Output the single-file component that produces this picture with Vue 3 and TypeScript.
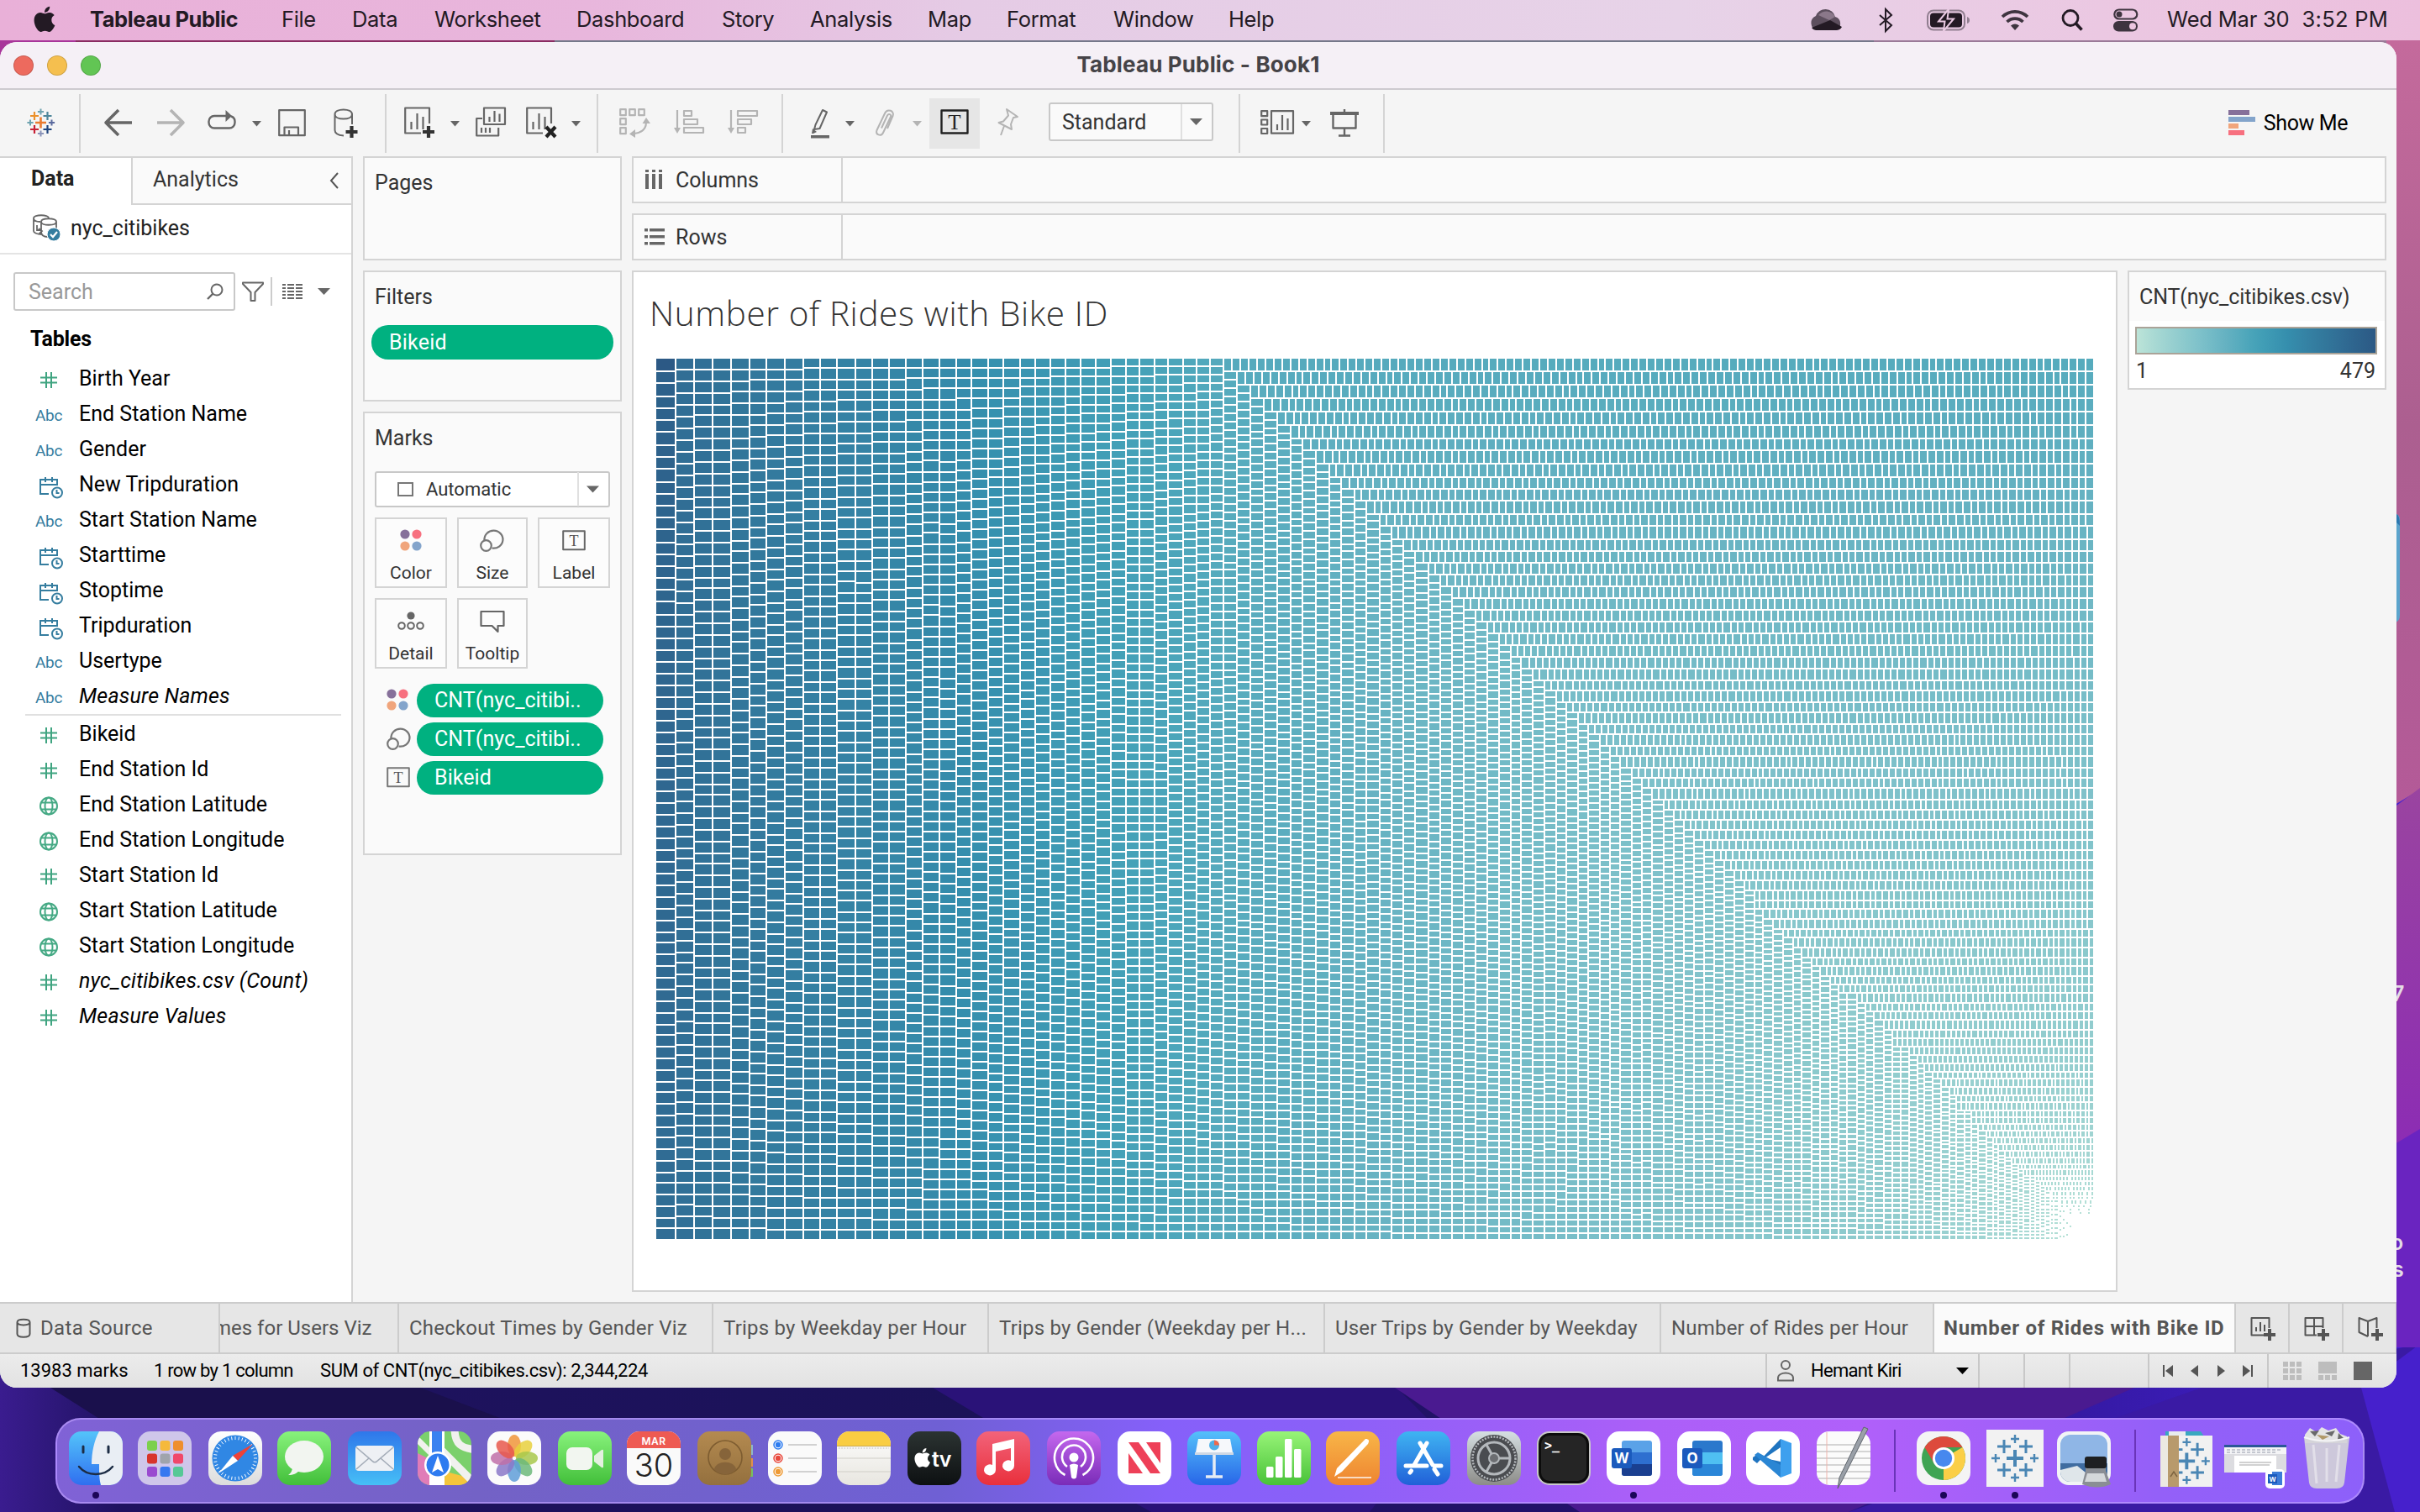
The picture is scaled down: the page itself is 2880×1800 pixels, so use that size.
<script setup lang="ts">
interface Glyph { k: string; x: number; w: number; sep?: boolean; active?: boolean }
interface Field { t: string; n: string; i?: boolean }

/* ---------- menu bar ---------- */
const menus = [
  { n: 'Tableau Public', w: 228 }, { n: 'File', w: 84 }, { n: 'Data', w: 98 },
  { n: 'Worksheet', w: 169 }, { n: 'Dashboard', w: 173 }, { n: 'Story', w: 105 },
  { n: 'Analysis', w: 140 }, { n: 'Map', w: 94 }, { n: 'Format', w: 127 },
  { n: 'Window', w: 137 }, { n: 'Help', w: 69 },
]

/* ---------- icon helpers ---------- */
const G = '#666'
const L = '#b4b4b4'
const plus = (x: number, y: number, r: number, c: string, s: number) =>
  `<path d="M${x - r} ${y}H${x + r}M${x} ${y - r}V${y + r}" stroke="${c}" stroke-width="${s}" fill="none"/>`
const st = (d: string, c = G, s = 2) => `<path d="${d}" stroke="${c}" stroke-width="${s}" fill="none" stroke-linejoin="round"/>`
const fl = (d: string, c = G) => `<path d="${d}" fill="${c}"/>`
const letterT = (x: number, y: number, s: number, c: string) =>
  `<text x="${x}" y="${y}" font-family="Liberation Serif, serif" font-size="${s}" text-anchor="middle" fill="${c}">T</text>`
const four = (s = 1) =>
  `<g transform="scale(${s})"><circle cx="6" cy="6" r="5.6" fill="#86709a"/><circle cx="20" cy="6" r="5.6" fill="#f7707f"/><circle cx="6" cy="20" r="5.6" fill="#f0a57c"/><circle cx="20" cy="20" r="5.6" fill="#83a4cb"/></g>`
const bubbles = `<path d="M5.500 13A11 10.500 0 1 1 14.500 22.500" stroke="#777" stroke-width="2.200" fill="none"/><circle cx="7.500" cy="19.500" r="6.300" stroke="#777" stroke-width="2.200" fill="none"/>`
const logo = (b: string[], k = 1) =>
  plus(16.5, 19, 6.5 * k, b[0], 2.6) + plus(16.5, 6, 3.6, b[1], 2) + plus(16.5, 32, 3.6, b[2], 2) +
  plus(4, 19, 3.6, b[3], 2) + plus(29.500, 19, 3.6, b[4], 2) + plus(9, 11, 5, b[5], 2.2) +
  plus(24.5, 11, 5, b[6], 2.2) + plus(9, 27, 5, b[7], 2.2) + plus(24.5, 27, 5, b[8], 2.2)

const glyphs: Record<string, string> = {
  logo: logo(['#eb7b30', '#6fa3b0', '#8a93b8', '#6fa3b0', '#5b6a9e', '#eb912c', '#4f879b', '#c72035', '#1f447e']),
  back: st('M18 4L3 19 18 34M3 19H34', G, 3.6),
  fwd: st('M16 4L31 19 16 34M31 19H0', L, 3.6),
  replay: st('M24 11H9a6.500 6.500 0 0 0-6.500 6.500v1.500a6.500 6.500 0 0 0 6.500 6.500h18a6.500 6.500 0 0 0 6.500-6.500v-1.500c0-3-1.500-5-4.500-6', G, 2.4) + fl('M22.500 4l7.500 7-7.500 7z'),
  caret: fl('M0 17h11l-5.500 6.500z'),
  caretL: fl('M0 17h11l-5.500 6.500z', L),
  save: st('M1.200 4.200h30.600v30H1.200zM7.500 34V24.500h16.500V34M13 34v-6', G, 2.2),
  ds: st('M2.500 9v19c0 3.500 4 6 10.500 6.500M23 9v12M2.500 9c0-3.500 4.500-5.500 10.300-5.500S23 5.500 23 9s-4.500 5.500-10.200 5.500S2.500 12.500 2.500 9z') + plus(22.500, 30, 7, '#333', 4.2),
  add: st('M20 31.500H1.200V1.500H30V20M8.500 27V18M15.500 27V8M22.500 27V12', G, 2.2) + plus(29, 30, 7, '#333', 4.2),
  dup: st('M10 1.500h25v19.500H10zM16.500 18v-6M22.500 18V5M28.500 18V8.500M8 14H1.200v20.500h26V25M7 31v-6M12 31v-6M17 31v-6', G, 2.2),
  clr: st('M20 31.500H1.200V1.500H30V20M8.500 27V18M15.500 27V8M22.500 27V12', G, 2.2) + st('M24 24l11 12M35 24L24 36', '#222', 4.2),
  swap: st('M1.200 3.200h6.600v7H1.200zM12.200 3.200h6.600v7h-6.600zM23.200 3.200h6.600v7h-6.600zM1.200 14.200h6.600v7H1.200zM1.200 25.200h6.600v7H1.200zM32 18c0 8-5 13-14 14', L, 2.2) + fl('M27.500 20L32 13l5 7zM19 27l-7 5.500L19 37z', L),
  asc: st('M4 4v24M12 5h9v6h-9zM12 15h16v6H12zM12 25h23v6H12z', L, 2.2) + fl('M0 25h8l-4 7z', L),
  desc: st('M4 4v24M12 5h23v6H12zM12 15h16v6H12zM12 25h9v6h-9z', L, 2.2) + fl('M0 25h8l-4 7z', L),
  pen: st('M14 4l5 2.500-8.500 19.500-6.500 1 1.500-5.500z') + fl('M0 34h22v3.500H0zM2 26l5 4-4 2-2 0z'),
  clip: st('M8 25.500l7-15c1.500-3 5-1 4 1.500l-9 19c-2.500 5-9.500 2.500-7.500-3L12 8c3-6.500 12-3 9.500 3L15 26', L, 2),
  label: st('M1.500 4.500h31v27h-31z', '#222', 2.4) + letterT(17, 27, 25, '#222'),
  pin: st('M11 3l13 9-5 1-3 8 1 6L1.500 19l5.500-1.500 6-7zM8 23L4 34', L, 2),
  fit: st('M1.200 5.200h7v6h-7zM1.200 15.500h7v6h-7zM1.200 26h7v6h-7zM13 5.200h26v26.500H13zM20 28v-7M26 28V10M32.500 28V14', G, 2.2),
  present: fl('M0 6h34v4H0z') + st('M17 3v4M3.500 9v16.500h27V9M17 26v8M10 34.500h14', G, 2.4),
}
const tools: Glyph[] = [
  { k: 'logo', x: 32, w: 33 }, { k: '', x: 94, w: 2, sep: true }, { k: 'back', x: 123, w: 34 },
  { k: 'fwd', x: 187, w: 34 }, { k: 'replay', x: 246, w: 36 }, { k: 'caret', x: 300, w: 11 },
  { k: 'save', x: 331, w: 34 }, { k: 'ds', x: 396, w: 31 }, { k: '', x: 458, w: 2, sep: true },
  { k: 'add', x: 481, w: 37 }, { k: 'caret', x: 536, w: 11 }, { k: 'dup', x: 566, w: 37 },
  { k: 'clr', x: 626, w: 38 }, { k: 'caret', x: 680, w: 11 }, { k: '', x: 710, w: 2, sep: true },
  { k: 'swap', x: 737, w: 38 }, { k: 'asc', x: 802, w: 38 }, { k: 'desc', x: 866, w: 38 },
  { k: '', x: 930, w: 2, sep: true }, { k: 'pen', x: 965, w: 24 }, { k: 'caret', x: 1006, w: 11 },
  { k: 'clip', x: 1041, w: 25 }, { k: 'caretL', x: 1086, w: 11 }, { k: 'label', x: 1106, w: 60, active: true },
  { k: 'pin', x: 1187, w: 28 },
]
const tools2: Glyph[] = [
  { k: '', x: 1474, w: 2, sep: true }, { k: 'fit', x: 1500, w: 41 }, { k: 'caret', x: 1549, w: 11 },
  { k: 'present', x: 1583, w: 34 }, { k: '', x: 1646, w: 2, sep: true },
]
const gap = (list: Glyph[], i: number, start: number) => list[i].x - (i ? list[i - 1].x + list[i - 1].w : start)

/* ---------- data pane ---------- */
const dims: Field[] = [
  { t: 'num', n: 'Birth Year' }, { t: 'abc', n: 'End Station Name' }, { t: 'abc', n: 'Gender' },
  { t: 'date', n: 'New Tripduration' }, { t: 'abc', n: 'Start Station Name' }, { t: 'date', n: 'Starttime' },
  { t: 'date', n: 'Stoptime' }, { t: 'date', n: 'Tripduration' }, { t: 'abc', n: 'Usertype' },
  { t: 'abc', n: 'Measure Names', i: true },
]
const measures: Field[] = [
  { t: 'num', n: 'Bikeid' }, { t: 'num', n: 'End Station Id' }, { t: 'geo', n: 'End Station Latitude' },
  { t: 'geo', n: 'End Station Longitude' }, { t: 'num', n: 'Start Station Id' }, { t: 'geo', n: 'Start Station Latitude' },
  { t: 'geo', n: 'Start Station Longitude' }, { t: 'num', n: 'nyc_citibikes.csv (Count)', i: true },
  { t: 'num', n: 'Measure Values', i: true },
]
const fieldIcons: Record<string, string> = {
  num: st('M13 5v19M19 5v19M6 11.500h20M6 17.500h20', '#3fa480', 2),
  geo: `<g fill="none" stroke="#45a984" stroke-width="2"><circle cx="16" cy="14.500" r="10"/><ellipse cx="16" cy="14.500" rx="4.500" ry="10"/><path d="M7 10.500H25M7 18.500H25"/></g>`,
  date: `<g fill="none" stroke="#357d9f" stroke-width="2"><path d="M16 24H6V7h20v7M6 13h20M12 4v6M20 4v6"/><circle cx="26" cy="22.500" r="6"/><path d="M25.500 19v4h3"/></g>`,
}

/* ---------- treemap ---------- */
const TOTAL = 2344224
const MAP_W = 1712
const MAP_H = 1050
const K = (MAP_W * MAP_H) / TOTAL
const ramp = ['#bce4d8', '#aedcd5', '#a1d5d2', '#95cecf', '#89c8cc', '#7ec1ca', '#72bac6', '#66b2c2', '#59acbe', '#4ba5ba',
  '#419eb6', '#3b96b2', '#358ead', '#3586a7', '#347ea1', '#32779b', '#316f96', '#2f6790', '#2d608a', '#2c5985']
/* ride count of the next bike, by the area still to be filled */
const profile: [number, number][] = [
  [1797600, 450], [1790000, 434], [1772400, 408], [1614900, 352], [1444800, 315], [1285200, 264], [1089000, 208],
  [935000, 196], [605000, 162], [399000, 140], [266000, 124], [174000, 111], [80600, 92], [41600, 76], [20200, 60],
  [8100, 43], [4200, 30], [2000, 19], [600, 8], [100, 3], [0, 1],
]
function rides(rest: number): number {
  for (let i = 1; i < profile.length; i++) {
    const [a1, v1] = profile[i - 1]
    const [a0, v0] = profile[i]
    if (rest >= a0) return Math.max(1, Math.round(v0 + ((v1 - v0) * (rest - a0)) / (a1 - a0)))
  }
  return 1
}
function shade(v: number): string {
  const p = ((v - 1) / 478) * 19
  const i = Math.min(18, Math.floor(p))
  const f = p - i
  const ch = (h: string, o: number) => parseInt(h.slice(o, o + 2), 16)
  return 'rgb(' + [1, 3, 5].map(o => Math.round(ch(ramp[i], o) * (1 - f) + ch(ramp[i + 1], o) * f)).join(',') + ')'
}
function buildTreemap(): { c: string; d: string }[] {
  const vals: number[] = [479]
  let rest = MAP_W * MAP_H - 479 * K
  while (rest > 0.5) {
    const v = rides(rest)
    vals.push(v)
    rest -= v * K
  }
  const paths = new Map<string, string>()
  const snap = (n: number) => Math.round(n / 2) * 2
  let x = 0, y = 0, i = 0
  let left = vals.reduce((a, b) => a + b, 0)
  const PHI = (1 + Math.sqrt(5)) / 2
  while (i < vals.length && left > 0) {
    const dx = MAP_W - x
    const dy = MAP_H - y
    if (dx <= 0 || dy <= 0) break
    const alpha = Math.max(dy / dx, dx / dy) / (left * PHI)
    let sum = vals[i], min = sum, max = sum
    let beta = sum * sum * alpha
    let best = Math.max(max / beta, beta / min)
    let j = i + 1
    for (; j < vals.length; j++) {
      const v = vals[j]
      const nMin = Math.min(min, v), nMax = Math.max(max, v)
      beta = (sum + v) * (sum + v) * alpha
      const r = Math.max(nMax / beta, beta / nMin)
      if (r > best) break
      sum += v
      min = nMin
      max = nMax
      best = r
    }
    const upright = dx >= dy
    const thick = ((upright ? dx : dy) * sum) / left
    let pos = upright ? y : x
    for (let k = i; k < j; k++) {
      const len = ((upright ? dy : dx) * vals[k]) / sum
      const x0 = snap(upright ? x : pos), x1 = snap(upright ? x + thick : pos + len) - 2
      const y0 = snap(upright ? pos : y), y1 = snap(upright ? pos + len : y + thick) - 2
      pos += len
      if (x1 > x0 && y1 > y0) {
        const c = shade(vals[k])
        paths.set(c, (paths.get(c) || '') + `M${x0} ${y0}H${x1}V${y1}H${x0}z`)
      }
    }
    if (upright) x += thick
    else y += thick
    left -= sum
    i = j
  }
  return [...paths].map(([c, d]) => ({ c, d }))
}
const treemap = buildTreemap()
const legendGradient = `linear-gradient(90deg, ${ramp.join(',')})`

/* ---------- sheet tabs ---------- */
const tabs = [
  { n: 'Checkout Times by Gender Viz', w: 374 }, { n: 'Trips by Weekday per Hour', w: 328 },
  { n: 'Trips by Gender (Weekday per H...', w: 400 }, { n: 'User Trips by Gender by Weekday', w: 400 },
  { n: 'Number of Rides per Hour', w: 325 },
]

/* ---------- dock ---------- */
const grad = (id: string, a: string, b: string) =>
  `<defs><linearGradient id="${id}" x1="0" y1="0" x2="0" y2="1"><stop offset="0" stop-color="${a}"/><stop offset="1" stop-color="${b}"/></linearGradient></defs>`
const tile = (id: string, a: string, b: string) => grad(id, a, b) + `<rect width="64" height="64" rx="15" fill="url(#${id})"/>`
const petals = ['#f0953a', '#e8d03c', '#a8c84c', '#6cb87a', '#5f9ed8', '#8a78c8', '#c070a8', '#e8584c']
  .map((c, i) => `<ellipse cx="32" cy="17" rx="8" ry="13" fill="${c}" opacity="0.85" transform="rotate(${i * 45} 32 32)"/>`).join('')
const pad = ['#7cd04c', '#f5b93c', '#ee8f2e', '#d8342c', '#a0a4ac', '#f0486a', '#9a4ad0', '#3678f0', '#56c896']
  .map((c, i) => `<rect x="${11 + (i % 3) * 15.500}" y="${11 + Math.floor(i / 3) * 15.500}" width="12" height="12" rx="3" fill="${c}"/>`).join('')
const appleBody = 'M20.500 16.700c0-2.900 2.400-4.300 2.500-4.400-1.400-2-3.500-2.300-4.200-2.300-1.800-.2-3.500 1-4.400 1s-2.300-1-3.800-1c-1.900 0-3.700 1.100-4.700 2.800-2 3.500-.5 8.700 1.400 11.500 1 1.400 2.100 2.900 3.600 2.900s2-.9 3.700-.9 2.300.9 3.800.9 2.600-1.400 3.500-2.800c1.100-1.600 1.600-3.100 1.600-3.200-.1 0-3-1.200-3-4.500zM17.700 8.200c.8-1 1.300-2.300 1.200-3.700-1.200.1-2.600.8-3.400 1.800-.7.9-1.400 2.200-1.200 3.600 1.300.1 2.600-.7 3.400-1.700z'
const clockTicks = Array.from({ length: 36 }, (_, i) => `<path d="M32 6v4" stroke="#fff" stroke-width="0.900" transform="rotate(${i * 10} 32 32)"/>`).join('')
const bluePlus = (() => {
  const c = '#4a86b4'
  return plus(32, 32, 10, c, 4) + plus(32, 9, 5, c, 2.4) + plus(32, 55, 5, c, 2.4) + plus(9, 32, 5, c, 2.4) + plus(55, 32, 5, c, 2.4) +
    plus(19, 18, 8, c, 3) + plus(45, 18, 8, c, 3) + plus(19, 46, 8, c, 3) + plus(45, 46, 8, c, 3)
})()
const wordMark = (l: string, a: string, b: string, c: string) =>
  `<rect x="18" y="11" width="36" height="42" rx="3" fill="${a}"/><path d="M18 25h36v14H18z" fill="${b}"/><path d="M18 39h36v11a3 3 0 0 1-3 3H21a3 3 0 0 1-3-3z" fill="${c}"/><rect x="6" y="20" width="24" height="24" rx="3" fill="#1a5abd"/><text x="18" y="38" font-family="Open Sans, sans-serif" font-weight="700" font-size="17" text-anchor="middle" fill="#fff">${l}</text>`

const dock: { x: number; w?: number; s?: string; dot?: boolean; sep?: boolean }[] = [
  { x: 82, dot: true, s: tile('g1', '#54c4fa', '#2f6ff0') + '<path d="M36 0h13a15 15 0 0 1 15 15v34a15 15 0 0 1-15 15H38c-2-8-2-14-2-25h-9c0-14 3-28 9-39z" fill="#e9eef4"/><path d="M17 18v7M47 18v7" stroke="#1c2c44" stroke-width="3" stroke-linecap="round"/><path d="M12 42c10 12 30 12 40 0" stroke="#1c2c44" stroke-width="2.500" fill="none" stroke-linecap="round"/>' },
  { x: 164, s: '<rect width="64" height="64" rx="15" fill="#cfc6ea"/>' + pad },
  { x: 248, s: tile('g2', '#ffffff', '#dcdcdc') + '<circle cx="32" cy="32" r="27.500" fill="#3087e4"/>' + clockTicks + '<path d="M53 15L29 29l6 6z" fill="#ee4237"/><path d="M12 50l23-15-6-6z" fill="#fff"/>' },
  { x: 330, s: tile('g3', '#88f27c', '#42bf3a') + '<ellipse cx="32" cy="30" rx="23" ry="19" fill="#f2f5f0"/><path d="M18 42c0 5-2 8-5 10 6 0 10-2 13-5z" fill="#f2f5f0"/>' },
  { x: 414, s: tile('g4', '#2f77ea', '#46bff6') + '<rect x="9" y="17" width="46" height="30" rx="4" fill="#eef0f4"/><path d="M10 19l20 17q2 1.500 4 0l20-17M10 45l15-13M54 45L39 32" stroke="#a4acb8" stroke-width="1.600" fill="none"/>' },
  { x: 497, s: '<defs><clipPath id="mc"><rect width="64" height="64" rx="15"/></clipPath></defs><g clip-path="url(#mc)"><path d="M0 0h64v64H0z" fill="#7bd06c"/><path d="M0 26l16 8v30H0z" fill="#e07cb8"/><path d="M34 48l30 8v8H30z" fill="#f4c53c"/><path d="M26 20L64 58M44-4c0 20 8 24 26 26" stroke="#f1f1ee" stroke-width="9" fill="none"/><path d="M0 10L20 30" stroke="#f1f1ee" stroke-width="7"/><path d="M14 0h18v64H14z" fill="#fff"/><path d="M17 0h12v30H17z" fill="#3b82f0"/></g><circle cx="24" cy="40" r="16" fill="#fff"/><circle cx="24" cy="40" r="13.500" fill="#2e7bf0"/><path d="M24 29l7 20-7-4-7 4z" fill="#fff"/>' },
  { x: 580, s: '<rect width="64" height="64" rx="15" fill="#fbfbfb"/>' + petals },
  { x: 664, s: tile('g5', '#88f27c', '#42bf3a') + '<rect x="10" y="19" width="31" height="27" rx="7" fill="#f2f6f0"/><path d="M43 29l9-7q2-1 2 1v19q0 2-2 1l-9-7z" fill="#e4f0e0"/>' },
  { x: 746, s: '<rect width="64" height="64" rx="15" fill="#fafafa"/><path d="M0 20V15A15 15 0 0 1 15 0h34a15 15 0 0 1 15 15v5z" fill="#ee5a52"/><text x="32" y="15.500" font-family="Inter, sans-serif" font-size="12" font-weight="600" text-anchor="middle" fill="#fff" letter-spacing="0.500">MAR</text><text x="32" y="54" font-family="Inter, sans-serif" font-size="38" font-weight="300" text-anchor="middle" fill="#222">30</text>' },
  { x: 830, s: '<rect x="58" y="16" width="8" height="12" fill="#8fb8c8"/><rect x="58" y="32" width="8" height="10" fill="#e0904c"/><rect x="58" y="44" width="8" height="10" fill="#78c060"/>' + tile('g6', '#b48a50', '#94703e') + '<circle cx="33" cy="31" r="20" fill="none" stroke="#7d5c30" stroke-width="1.600"/><circle cx="33" cy="27" r="7" fill="#86643a"/><path d="M20 45c2-11 24-11 26 0-6 8-20 8-26 0z" fill="#86643a"/>' },
  { x: 914, s: '<rect width="64" height="64" rx="15" fill="#fafafa"/><g fill="#fff" stroke-width="1.500"><circle cx="12" cy="16" r="5" stroke="#2d7cf0"/><circle cx="12" cy="32" r="5" stroke="#e8483c"/><circle cx="12" cy="48" r="5" stroke="#ee9a34"/></g><circle cx="12" cy="16" r="3.200" fill="#2d7cf0"/><circle cx="12" cy="32" r="3.200" fill="#e8483c"/><circle cx="12" cy="48" r="3.200" fill="#ee9a34"/><path d="M24 16h34M24 32h34M24 48h34" stroke="#c4c4c4" stroke-width="1.600"/>' },
  { x: 996, s: tile('g7', '#fdfdfc', '#e8e6e0') + '<path d="M0 17V15A15 15 0 0 1 15 0h34a15 15 0 0 1 15 15v2z" fill="#f9cd42"/><path d="M0 17.500h64" stroke="#c9a850" stroke-width="1.200"/><path d="M2 20h60" stroke="#b9b9b9" stroke-width="1.200" stroke-dasharray="1.500 1.800"/><path d="M0 32h64M0 48h64" stroke="#cfcdc8" stroke-width="1.200"/>' },
  { x: 1080, s: tile('g8', '#2b3332', '#0d1012') + `<g transform="translate(3.500 15.500)"><path d="${appleBody}" fill="#fff"/></g><text x="29" y="41.500" font-family="Inter, sans-serif" font-size="25" font-weight="600" fill="#fff" letter-spacing="-0.500">tv</text>` },
  { x: 1162, s: tile('g9', '#f2637a', '#e9303c') + '<path d="M45 9v32a7 6.500 0 1 1-4-6V20l-18 4v22a7 6.500 0 1 1-4-6V15z" fill="#fff"/>' },
  { x: 1246, s: tile('g10', '#c468ee', '#7a2cb8') + '<g fill="none" stroke="#fff" stroke-width="2.600"><path d="M21.500 52a23 23 0 1 1 21 0"/><path d="M24 42a14 14 0 1 1 16 0"/></g><circle cx="32" cy="31" r="5.500" fill="#fff"/><path d="M27 40q5-3 10 0l-2 15q-3 3-6 0z" fill="#fff"/>' },
  { x: 1330, s: '<rect width="64" height="64" rx="15" fill="#fff"/><path d="M13 13h12l26 37H39z" fill="#ee4058"/><path d="M13 26v24h17zM51 38V13H34z" fill="#ee4058"/>' },
  { x: 1413, s: tile('g11', '#54c0fa', '#2866e8') + '<path d="M13 9h38l3 16H10z" fill="#f6f8fb"/><path d="M9 25h46v3H9z" fill="#cfd8e4"/><circle cx="32" cy="16.500" r="6" fill="#4fb0e8"/><path d="M32 16.500v-6a6 6 0 0 1 6 6z" fill="#ee6a4c"/><path d="M32 28v25M22 54h20" stroke="#e6ecf4" stroke-width="3.500"/>' },
  { x: 1496, s: tile('g12', '#98f478', '#48c238') + '<g fill="#fff"><rect x="11" y="42" width="8.500" height="13" rx="1.500"/><rect x="22" y="30" width="8.500" height="25" rx="1.500"/><rect x="33" y="9" width="8.500" height="46" rx="1.500"/><rect x="44" y="21" width="8.500" height="34" rx="1.500"/></g>' },
  { x: 1578, s: tile('g13', '#f8b648', '#ee8430') + '<path d="M47 9c4 0 5 2 3 6L19 48l-9 6 3-10z" fill="#fff"/><path d="M14 55h40" stroke="#fff" stroke-width="1.800" opacity="0.700"/>' },
  { x: 1662, s: tile('g14', '#3fb4f2', '#2160d8') + '<g stroke="#fff" stroke-width="5" stroke-linecap="round" fill="none"><path d="M28 14l15 26M36 14L21 40M11 41h25M45 41h8M16 49l1.500-2M45 45l4 6"/></g>' },
  { x: 1746, s: tile('g15', '#d5dfe2', '#8c8c88') + '<circle cx="32" cy="32" r="28" fill="#4a4c50"/><circle cx="32" cy="32" r="25.500" fill="none" stroke="#b4b8bc" stroke-width="2.500" stroke-dasharray="2 1.600"/><circle cx="32" cy="32" r="19" fill="none" stroke="#b4b8bc" stroke-width="3"/><path d="M32 32h18M32 32L23 16M32 32l-9 16" stroke="#b4b8bc" stroke-width="3"/><circle cx="32" cy="32" r="6" fill="#6c6e72" stroke="#b4b8bc" stroke-width="2"/>' },
  { x: 1829, s: '<rect width="64" height="64" rx="15" fill="#c9c9c9"/><rect x="2" y="2" width="60" height="60" rx="13" fill="#0c0c0c"/><rect x="5" y="5" width="54" height="54" rx="10" fill="#252525"/><text x="9" y="22" font-family="DejaVu Sans Mono, monospace" font-size="15" font-weight="700" fill="#fff">&gt;_</text>' },
  { x: 1912, dot: true, s: '<rect width="64" height="64" rx="15" fill="#fff"/>' + wordMark('W', '#5aa2e8', '#2e6fd0', '#1a3f90') },
  { x: 1996, s: '<rect width="64" height="64" rx="15" fill="#fff"/>' + wordMark('O', '#2a78cc', '#4fc0f2', '#2a86d8') },
  { x: 2078, s: '<rect width="64" height="64" rx="15" fill="#fff"/><path d="M41 9l13 5v36l-13 5z" fill="#3ea0ee"/><path d="M41 9L13 38l-5-4v-3l6-4L41 50v-14L22 32l19-13z" fill="#1f74c0"/><path d="M41 55L10 28l4-3 27 15z" fill="#2a86d4"/>' },
  { x: 2162, s: '<rect width="64" height="64" rx="15" fill="#fbfbfb"/><path d="M0 16h64M0 24h64M0 32h64M0 40h64M0 48h64M2 56h60" stroke="#c8c8c8" stroke-width="1.300"/><path d="M12 1v62" stroke="#eeb4ac" stroke-width="1"/><path d="M56-5l5 2-30 60-6 11 2-13z" fill="#9aa0a8" stroke="#60666e" stroke-width="1"/>' },
  { x: 2254, w: 2, sep: true },
  { x: 2281, dot: true, s: '<rect width="64" height="64" rx="15" fill="#f4f4f4"/><circle cx="32" cy="32" r="26" fill="#3fa453"/><path d="M32 32l22.500-13A26 26 0 0 1 32 58z" fill="#fbcf46"/><path d="M9.500 19L21 38.500l11-19.500h22.500A26 26 0 0 0 9.500 19z" fill="#dd4a3c"/><circle cx="32" cy="32" r="13" fill="#fff"/><circle cx="32" cy="32" r="10.200" fill="#4788ee"/>' },
  { x: 2366, dot: true, s: '<rect x="-2" y="-2" width="68" height="68" fill="#f2f2f2"/>' + bluePlus },
  { x: 2448, s: '<rect width="64" height="64" rx="14" fill="#f2f4f6"/><path d="M4 40V16A12 12 0 0 1 16 4h32a12 12 0 0 1 12 12v24z" fill="#8fb6e6"/><path d="M4 38h56v10a12 12 0 0 1-12 12H16A12 12 0 0 1 4 48z" fill="#3f6ca0"/><path d="M4 46l20-5 10 8 14-3v14H16A12 12 0 0 1 4 48z" fill="#dfe6ea"/><path d="M34 32h24v15l6 16q-16 7-34 0l4-16z" fill="#8a8e94"/><rect x="33" y="30" width="26" height="14" rx="3" fill="#1e2022"/><path d="M36 50h20l3 10H33z" fill="#d4d8da"/>' },
  { x: 2540, w: 2, sep: true },
  { x: 2571, s: '<path d="M6 0h42l4 6v10H6z" fill="#3aa8c0"/><path d="M10 0h20v10H10z" fill="#e8ecee"/><path d="M0 5h62v61H0z" fill="#f1f1f1"/><g transform="translate(0 4) scale(0.980)">' + bluePlus + '</g><path d="M9 5h13v61H9z" fill="#b89a6c"/><path d="M0 5h9v61H0z" fill="#ece9e2"/><path d="M12 54l4-6 4 6" stroke="#7c6440" stroke-width="1.500" fill="none"/>' },
  { x: 2647, w: 74, s: '<path d="M0 16h74v33H0z" fill="#f4f4f6"/><path d="M0 16h74v3H0z" fill="#2b5797"/><path d="M0 27h74v22H0z" fill="#dcdce0"/><path d="M12 29h50v20H12z" fill="#fff"/><path d="M3 22h66M3 25h60" stroke="#b4b8c4" stroke-width="1.500" stroke-dasharray="4 2"/><path d="M18 37h38M18 40h36" stroke="#a4a4a4" stroke-width="1"/><rect x="49" y="45" width="23" height="23" rx="5" fill="#fff"/><rect x="57" y="48" width="12" height="16" fill="#3c7cd8"/><rect x="52" y="51" width="11" height="11" fill="#1a5abd"/><text x="57.500" y="60" font-family="Open Sans, sans-serif" font-weight="700" font-size="8" text-anchor="middle" fill="#fff">W</text>' },
  { x: 2739, w: 60, s: '<path d="M4 4l6-8 8 5 6-6 8 4 9-3 5 7 8 3v8H4z" fill="#e4e4e4"/><path d="M10 0l6 6 5-7zM28 2l8 4 4-7zM44 2l6 6-7 2z" fill="#6a6a6a"/><path d="M18 4l7 6 8-4z" fill="#b09868"/><path d="M3 7q27 9 54 0l-6 54q-1 7-9 7H18q-8 0-9-7z" fill="#d3d1d8" opacity="0.920"/><path d="M3 7q27 9 54 0" stroke="#f4f4f6" stroke-width="2" fill="none"/><path d="M14 16l4 46M30 20v40M45 16l-4 44" stroke="#eceaf0" stroke-width="3" opacity="0.700"/>' },
]
const dockGap = (i: number) => dock[i].x - (i ? dock[i - 1].x + (dock[i - 1].w || 64) : 68)
</script>

<template>
  <div class="screen">
    <svg class="wall" viewBox="0 0 2880 1800" width="2880" height="1800" aria-hidden="true">
      <defs>
        <linearGradient id="floor" x1="0" x2="1" y1="0" y2="0">
          <stop offset="0" stop-color="#3a1c8f" /><stop offset="0.05" stop-color="#1f1260" />
          <stop offset="0.4" stop-color="#1b1258" /><stop offset="0.7" stop-color="#24126e" />
          <stop offset="1" stop-color="#4420d4" />
        </linearGradient>
        <linearGradient id="side" x1="0" x2="0" y1="0" y2="1">
          <stop offset="0" stop-color="#c46a9c" /><stop offset="0.5" stop-color="#ac5f90" />
          <stop offset="1" stop-color="#b45a98" />
        </linearGradient>
        <linearGradient id="side2" x1="0" x2="0" y1="0" y2="1">
          <stop offset="0" stop-color="#9a44a0" /><stop offset="1" stop-color="#8c2cb4" />
        </linearGradient>
      </defs>
      <rect width="2880" height="1800" fill="url(#floor)" />
      <path d="M0 48h90v60H0z" fill="#a8359a" />
      <path d="M90 48h570v4H90z" fill="#8a2c62" />
      <path d="M660 48h1570v4H660z" fill="#75788a" />
      <path d="M2230 48h620v4h-620z" fill="#9a7a98" />
      <path d="M500 1652l100 38H120l-60-38z" fill="#1a104c" />
      <path d="M1110 1652l60 36 200 112h260l80-100-48-48z" fill="#2a1278" />
      <path d="M1660 1652l220 148h320l340-148z" fill="#4a1a90" />
      <path d="M2620 1652l-420 148h680v-200z" fill="#3a1aa4" />
      <path d="M2810 1652l40 148h30v-200z" fill="#4620cc" />
      <path d="M2840 48h40v892l-40 24z" fill="url(#side)" />
      <path d="M2840 968l40-30v410l-40 20z" fill="url(#side2)" />
      <path d="M2840 1368l40-24v260h-40z" fill="#6a24c0" />
      <path d="M2840 612h12q4 1 4 8v112q0 8-6 9h-10z" fill="#5ba4cc" />
      <path d="M2840 612h12q4 1 4 14l-4-4h-12z" fill="#2c78b0" />
      <g font-family="Inter, sans-serif" font-size="25" font-weight="600" fill="#e4dce4">
        <text x="2847" y="1192">7</text><text x="2845" y="1488">o</text><text x="2847" y="1520">s</text>
      </g>
    </svg>

    <header class="menubar">
      <svg class="apple" width="26" height="34" viewBox="4.500 4 19.500 24"><path :d="appleBody" fill="#231a24" /></svg>
      <span v-for="(m, i) in menus" :key="m.n" :class="['mi', { strong: i === 0 }]" :style="{ width: m.w + 'px' }">{{ m.n }}</span>
      <div class="tray">
        <svg width="40" height="26" viewBox="0 0 40 26"><path d="M9 25a9 9 0 0 1-1-17A12 12 0 0 1 31 9a8.500 8.500 0 0 1 1 16z" fill="#5d4f5e" /><path d="M11 7a12 12 0 0 1 20 2l-7 4z" fill="#8b788a" /><path d="M3 22l22-9 14 8q-2 4-7 4H9q-4 0-6-3z" fill="#231a24" /></svg>
        <svg width="16" height="28" viewBox="0 0 16 28" fill="none" stroke="#231a24" stroke-width="2"><path d="M1 8l14 12-7 7V1l7 7L1 20" /></svg>
        <svg width="52" height="26" viewBox="0 0 52 26"><rect x="1" y="1.500" width="44" height="23" rx="7" fill="none" stroke="#917f90" stroke-width="2" /><rect x="4" y="4.500" width="38" height="17" rx="4" fill="#231a24" /><path d="M48 9q3 1 3 4t-3 4z" fill="#917f90" /><path d="M26 0L14 14.500h7.500L20 26l12-14.500h-7.500z" fill="#231a24" stroke="#e9cae2" stroke-width="2" /></svg>
        <svg width="34" height="26" viewBox="0 0 34 26" fill="none" stroke="#3e343f" stroke-width="3.600"><path d="M2 9a21.500 21.500 0 0 1 30 0M7.500 15a13.500 13.500 0 0 1 19 0" /><path d="M12 19.500q5-4 10 0l-5 5.500z" fill="#3e343f" stroke="none" /></svg>
        <svg width="26" height="28" viewBox="0 0 26 28" fill="none" stroke="#231a24" stroke-width="2.800"><circle cx="11" cy="11.500" r="9" /><path d="M17.500 18l7 7.500" stroke-width="3.600" /></svg>
        <svg width="30" height="28" viewBox="0 0 30 28"><rect x="1.300" y="1.500" width="27" height="11" rx="5.500" fill="none" stroke="#3e343f" stroke-width="2.200" /><circle cx="7" cy="7" r="3.500" fill="#3e343f" /><rect y="15" width="29" height="12.500" rx="6.200" fill="#3e343f" /><circle cx="23" cy="21.200" r="4" fill="#ecc6e0" /></svg>
        <span class="clock"><span>Wed Mar 30</span><span class="time">3:52 PM</span></span>
      </div>
    </header>

    <main class="window">
      <div class="titlebar">
        <i class="light red" /><i class="light amber" /><i class="light green" />
        <span class="wtitle">Tableau Public - Book1</span>
      </div>

      <div class="toolbar">
        <template v-for="(t, i) in tools" :key="i">
          <i v-if="t.sep" class="tsep" :style="{ marginLeft: gap(tools, i, 0) + 'px' }" />
          <span v-else-if="t.active" class="tactive" :style="{ marginLeft: gap(tools, i, 0) + 'px' }">
            <svg width="34" height="40" v-html="glyphs[t.k]" />
          </span>
          <svg v-else :width="t.w" height="40" :style="{ marginLeft: gap(tools, i, 0) + 'px' }" v-html="glyphs[t.k]" />
        </template>
        <div class="select std"><span>Standard</span><i class="down" /></div>
        <template v-for="(t, i) in tools2" :key="'b' + i">
          <i v-if="t.sep" class="tsep" :style="{ marginLeft: gap(tools2, i, 1444) + 'px' }" />
          <svg v-else :width="t.w" height="40" :style="{ marginLeft: gap(tools2, i, 1444) + 'px' }" v-html="glyphs[t.k]" />
        </template>
        <div class="showme">
          <svg width="32" height="31" viewBox="0 0 32 31"><path d="M0 0h25v6H0z" fill="#86709a" /><path d="M0 8h32v6H0z" fill="#83a4cb" /><path d="M0 16h12v6H0z" fill="#f0a57c" /><path d="M0 24h19v6H0z" fill="#f7707f" /></svg>
          <span>Show Me</span>
        </div>
      </div>

      <div class="body">
        <aside class="data">
          <div class="ptabs">
            <b>Data</b>
            <span class="ana"><span>Analytics</span><svg width="12" height="20" viewBox="0 0 12 20" fill="none" stroke="#555" stroke-width="2"><path d="M10 1L2 10l8 9" /></svg></span>
          </div>
          <div class="source">
            <svg width="34" height="32" viewBox="0 0 34 32" fill="none" stroke="#666" stroke-width="1.800"><path d="M11 24c-6 0-10-2-10-4V5c0-5 18-5 18 0M1 5c0 3 4 4 8 4M10 21V9c0-5 18-5 18 0s-18 5-18 0M28 9v8M10 21c0 3 2 6 8 6M5 13v6h5M7 17l4 3-4 4" /><circle cx="25" cy="24" r="8" fill="#357d9f" stroke="#fff" stroke-width="1" /><path d="M21 24l3 3 5-6" stroke="#fff" stroke-width="2.200" /></svg>
            nyc_citibikes
          </div>
          <div class="find">
            <div class="search">Search<svg width="20" height="20" viewBox="0 0 20 20" fill="none" stroke="#666" stroke-width="2"><circle cx="12" cy="8" r="6.500" /><path d="M7.500 12.500L1 19" stroke-width="2.400" /></svg></div>
            <svg width="26" height="26" viewBox="0 0 26 26" fill="none" stroke="#666" stroke-width="2" stroke-linejoin="round"><path d="M1 2.500h24v1.500L15.500 14v10h-5V14L1 4z" /></svg>
            <i class="vr" />
            <svg width="24" height="20" viewBox="0 0 24 20" stroke="#666" stroke-width="2"><path d="M0 2h4M6 2h8M16 2h8M0 6h4M6 6h8M16 6h8M0 10h4M6 10h8M16 10h8M0 14h4M6 14h8M16 14h8M0 18h4M6 18h8M16 18h8" /></svg>
            <i class="down d2" />
          </div>
          <b class="tables">Tables</b>
          <ul>
            <li v-for="f in dims" :key="f.n"><span v-if="f.t === 'abc'" class="abc">Abc</span><svg v-else width="32" height="30" v-html="fieldIcons[f.t]" /><span :class="{ it: f.i }">{{ f.n }}</span></li>
          </ul>
          <hr>
          <ul>
            <li v-for="f in measures" :key="f.n"><svg width="32" height="30" v-html="fieldIcons[f.t]" /><span :class="{ it: f.i }">{{ f.n }}</span></li>
          </ul>
        </aside>

        <section class="cards">
          <div class="card pages"><h3>Pages</h3></div>
          <div class="card filters"><h3>Filters</h3><div class="pill wide">Bikeid</div></div>
          <div class="card marks">
            <h3>Marks</h3>
            <div class="select auto"><i class="sq" /><span>Automatic</span><i class="down" /></div>
            <div class="btns">
              <div class="btn b1"><svg width="26" height="28" v-html="four()" /><span>Color</span></div>
              <div class="btn b2"><svg width="30" height="28" v-html="bubbles" /><span>Size</span></div>
              <div class="btn b3"><svg width="28" height="28" v-html="st('M1.200 2.200h25.600v22H1.200z') + letterT(14, 20, 18, '#555')" /><span>Label</span></div>
              <div class="btn b1"><svg width="32" height="28" viewBox="0 0 32 28"><circle cx="16" cy="7" r="4.600" fill="#666" /><g fill="none" stroke="#666" stroke-width="2"><circle cx="5" cy="19" r="3.800" /><circle cx="16" cy="19" r="3.800" /><circle cx="27" cy="19" r="3.800" /></g></svg><span>Detail</span></div>
              <div class="btn b2"><svg width="30" height="28" v-html="st('M1.500 2h27v17h-7v7l-7-7h-13z', '#666', 2.2)" /><span>Tooltip</span></div>
            </div>
            <div class="mrow"><svg width="30" height="28" v-html="four()" /><div class="pill">CNT(nyc_citibi..</div></div>
            <div class="mrow"><svg width="30" height="28" v-html="bubbles" /><div class="pill">CNT(nyc_citibi..</div></div>
            <div class="mrow"><svg width="30" height="28" v-html="st('M1.200 2.200h25.600v22H1.200z', '#777') + letterT(14, 20, 18, '#555')" /><div class="pill">Bikeid</div></div>
          </div>
        </section>

        <section class="work">
          <div class="shelf"><div class="sh"><svg width="24" height="26" viewBox="0 0 24 26"><path d="M1 1h4v3H1zM9 1h4v3H9zM17 1h4v3h-4zM1 6h4v18H1zM9 6h4v18H9zM17 6h4v18h-4z" fill="#666" /></svg>Columns</div></div>
          <div class="shelf"><div class="sh"><svg width="24" height="26" viewBox="0 0 24 26"><path d="M0 3h4v3.500H0zM6 3h18v3.500H6zM0 11h4v3.500H0zM6 11h18v3.500H6zM0 19h4v3.500H0zM6 19h18v3.500H6z" fill="#666" /></svg>Rows</div></div>
          <div class="viewrow">
            <div class="view">
              <h1>Number of Rides with Bike ID</h1>
              <svg :width="MAP_W" :height="MAP_H" shape-rendering="crispEdges"><path v-for="p in treemap" :key="p.c" :fill="p.c" :d="p.d" /></svg>
            </div>
            <div class="legend">
              <div class="lh">CNT(nyc_citibikes.csv)</div>
              <div class="lb"><div class="ramp" :style="{ background: legendGradient }" /><div class="ll"><span>1</span><span>479</span></div></div>
            </div>
          </div>
        </section>
      </div>

      <footer class="tabs">
        <div class="tab src"><svg width="18" height="24" viewBox="0 0 18 24" fill="none" stroke="#555" stroke-width="2"><path d="M1.500 5v14c0 5 15 5 15 0V5c0-4.500-15-4.500-15 0s15 4.500 15 0" /></svg>Data Source</div>
        <div class="tab cut"><span>mes for Users Viz</span></div>
        <div v-for="t in tabs" :key="t.n" class="tab" :style="{ width: t.w + 'px' }">{{ t.n }}</div>
        <div class="tab on">Number of Rides with Bike ID</div>
        <div class="tab ic"><svg width="32" height="32" v-html="st('M17 22.500H1.500V2h21v12M7 18v-5M12 18V7M17 18v-8', '#555') + plus(23, 22, 7, '#555', 4)" /></div>
        <div class="tab ic"><svg width="32" height="32" v-html="st('M15 22.500H1.500V2h21v12M1.500 12h21M12 2v20', '#555') + plus(23, 22, 7, '#555', 4)" /></div>
        <div class="tab ic"><svg width="32" height="32" v-html="st('M12 24L1.500 19V2L12 6l10.500-4v12M12 6v18', '#555') + plus(23, 22, 7, '#555', 4)" /></div>
      </footer>
      <footer class="status">
        <span class="s1">13983 marks</span><span class="s2">1 row by 1 column</span><span class="s3">SUM of CNT(nyc_citibikes.csv): 2,344,224</span>
        <div class="user"><svg width="22" height="28" viewBox="0 0 22 28" fill="none" stroke="#666" stroke-width="2"><circle cx="11" cy="7" r="5" /><path d="M2 25.500v-3c0-8 18-8 18 0v3z" /></svg><span>Hemant Kiri</span><i class="down dk" /></div>
        <i class="cell c1" /><i class="cell c2" /><i class="cell c3" />
        <div class="nav"><svg width="112" height="16" viewBox="0 0 112 16" fill="#555"><path d="M1 1h2v14H1zM13 1v14L4 8zM43 1v14L34 8zM66 1v14l9-7zM96 1v14l9-7zM106 1h2v14h-2z" /></svg></div>
        <div class="modes"><svg width="108" height="24" viewBox="0 0 108 24"><path d="M0 1h6v6H0zM8 1h6v6H8zM16 1h6v6h-6zM0 9h6v6H0zM8 9h6v6H8zM16 9h6v6h-6zM0 17h6v6H0zM8 17h6v6H8zM16 17h6v6h-6zM42 1h22v14H42zM42 17h6v6h-6zM50 17h6v6h-6zM58 17h6v6h-6z" fill="#bdbdbd" /><path d="M84 1h22v22H84z" fill="#666" /></svg></div>
      </footer>
    </main>

    <nav class="dock">
      <template v-for="(d, i) in dock" :key="i">
        <i v-if="d.sep" class="dsep" :style="{ marginLeft: dockGap(i) + 'px' }" />
        <div v-else class="app" :style="{ marginLeft: dockGap(i) + 'px', width: (d.w || 64) + 'px' }">
          <svg :width="d.w || 64" height="64" v-html="d.s" />
          <i v-if="d.dot" class="dot" />
        </div>
      </template>
    </nav>
  </div>
</template>

<style>
html, body { margin: 0; background: #1b1258; }
</style>

<style scoped>
* { box-sizing: border-box; }
.screen { position: relative; width: 2880px; height: 1800px; overflow: hidden; font-family: Roboto, "Liberation Sans", sans-serif; font-size: 25px; color: #333; }
.screen svg { display: block; flex: none; overflow: visible; }
.wall { position: absolute; inset: 0; }
i { display: block; flex: none; }

.menubar { position: relative; height: 48px; display: flex; align-items: center; background: linear-gradient(90deg, #e9b0d8 0, #e8b6dc 700px, #e5cbe5 1150px, #e7d3e8 2000px, #ebc8e2 2500px, #ecbfdd 2880px); font: 25.500px Inter, sans-serif; letter-spacing: -0.350px; color: #231a24; white-space: nowrap; }
.apple { margin: 0 41px 3px 40px; }
.mi { flex: none; padding-bottom: 3px; }
.strong { font-weight: 700; letter-spacing: -0.450px; }
.tray { position: relative; width: 726px; margin-left: 622px; display: flex; align-items: center; flex: none; }
.tray svg:nth-child(2) { margin-left: 43px; }
.tray svg:nth-child(3) { margin-left: 41px; }
.tray svg:nth-child(4) { margin-left: 36px; }
.tray svg:nth-child(5) { margin-left: 38px; }
.tray svg:nth-child(6) { margin-left: 36px; }
.clock { margin-left: 34px; display: flex; gap: 15px; padding-bottom: 3px; letter-spacing: -0.200px; }
.time { letter-spacing: 0.300px; }

.window { position: relative; margin-top: 2px; width: 2852px; height: 1602px; border-radius: 20px; overflow: hidden; background: #f5f5f5; display: flex; flex-direction: column; }
.titlebar { position: relative; height: 57px; flex: none; background: #f5f0f6; border-bottom: 2px solid #cdcacf; display: flex; align-items: center; padding-left: 16px; gap: 16px; }
.light { width: 24px; height: 24px; border-radius: 50%; border: 1px solid rgba(0, 0, 0, 0.15); }
.red { background: #ed6a5e; }
.amber { background: #f5bf4f; }
.green { background: #62c554; }
.wtitle { flex: 1; text-align: center; font: 700 26px Inter, sans-serif; letter-spacing: 0.150px; color: #454347; padding-right: 136px; margin-bottom: 3px; }
.toolbar { height: 79px; flex: none; display: flex; align-items: center; background: #f5f5f5; }
.tsep { width: 2px; height: 70px; background: #d4d4d4; }
.tactive { width: 60px; height: 60px; background: #e6e6e6; display: flex; align-items: center; justify-content: center; }
.select { border: 2px solid #c8c8c8; border-radius: 3px; background: #fafafa; display: flex; align-items: center; }
.std { width: 196px; height: 46px; margin: -3px 0 0 33px; padding-left: 14px; }
.std span { flex: 1; }
.down { width: 15px; height: 8px; background: #666; clip-path: polygon(0 0, 100% 0, 50% 100%); }
.select .down { width: 37px; height: 42px; background: linear-gradient(#e0e0e0, #e0e0e0) 0 0 / 2px 100% no-repeat, #666; clip-path: polygon(0 0, 2px 0, 2px 42px, 0 42px, 0 0, 11px 17px, 26px 17px, 18.500px 25px, 11px 17px, 0 0); }
.showme { margin-left: auto; margin-right: 58px; display: flex; align-items: center; gap: 10px; color: #000; letter-spacing: -0.400px; }

.body { flex: 1; display: flex; min-height: 0; }
.data { width: 420px; background: #fff; border-right: 2px solid #d4d4d4; display: flex; flex-direction: column; flex: none; border-top: 2px solid #d4d4d4; color: #000; }
.ptabs { height: 56px; display: flex; flex: none; }
.ptabs b { width: 156px; padding: 10px 0 0 37px; color: #222; font-size: 25px; }
.ana { flex: 1; background: #fafafa; border-left: 2px solid #d4d4d4; border-bottom: 2px solid #d4d4d4; padding: 0 14px 0 24px; display: flex; align-items: center; justify-content: space-between; color: #333; }
.ana span { padding-bottom: 3px; }
.source { height: 59px; flex: none; border-bottom: 2px solid #e4e4e4; display: flex; align-items: center; padding: 0 0 3px 39px; gap: 11px; color: #222; }
.find { height: 46px; margin-top: 21px; display: flex; align-items: center; flex: none; padding-left: 16px; }
.search { width: 264px; height: 46px; border: 2px solid #c8c8c8; border-radius: 3px; display: flex; align-items: center; justify-content: space-between; padding: 0 12px 0 16px; color: #999; margin-right: 8px; }
.vr { width: 2px; height: 34px; background: #ccc; margin: 0 12px 0 8px; }
.d2 { margin-left: 18px; margin-top: 0; }
.tables { font-size: 25px; margin: 19px 0 12px 36px; line-height: 29px; height: 29px; flex: none; letter-spacing: -0.200px; }
ul { list-style: none; margin: 0; padding: 0; }
li { height: 42px; display: flex; align-items: center; padding-left: 42px; line-height: 42px; }
li svg { margin-right: 20px; margin-top: 3px; }
.abc { width: 52px; color: #357d9f; font-size: 19px; letter-spacing: -0.300px; padding-top: 4px; }
.it { font-style: italic; letter-spacing: 0.200px; }
hr { width: 376px; height: 2px; background: #e0e0e0; border: 0; margin: 0 0 1px 30px; flex: none; }

.cards { width: 308px; margin-left: 12px; flex: none; display: flex; flex-direction: column; gap: 12px; }
.card { background: #fafafa; border: 2px solid #d4d4d4; }
.card h3 { font-size: 25px; font-weight: 400; margin: 0; padding: 15px 0 0 12px; line-height: 29px; color: #333; }
.pages { height: 124px; }
.filters { height: 156px; }
.marks { height: 528px; }
.pill { background: #00b180; color: #fff; height: 40px; border-radius: 20px; display: flex; align-items: center; padding: 0 0 1px 21px; width: 222px; letter-spacing: 0.050px; }
.wide { width: 288px; margin: 19px 0 0 8px; height: 41px; letter-spacing: 0.200px; }
.auto { width: 280px; height: 43px; margin: 25px 0 12px 12px; font-size: 22px; background: #fff; }
.auto span { flex: 1; margin-left: 15px; }
.sq { width: 19px; height: 17px; border: 2px solid #777; margin-left: 25px; }
.btns { display: grid; grid-template-columns: 86px 84px 86px; gap: 12px; margin-left: 12px; }
.btn { height: 84px; border: 2px solid #d4d4d4; background: #fcfcfc; display: flex; flex-direction: column; align-items: center; font-size: 21px; padding-top: 12px; color: #333; }
.btn span { margin-top: 12px; line-height: 24px; }
.mrow { display: flex; align-items: center; margin: 6px 0 0 26px; gap: 6px; height: 40px; }
.mrow svg { margin-right: 0; }
.btns + .mrow { margin-top: 18px; }

.work { flex: 1; margin: 0 12px 0 12px; display: flex; flex-direction: column; }
.shelf { height: 56px; border: 2px solid #d4d4d4; background: #fafafa; flex: none; margin-bottom: 12px; }
.sh { width: 249px; height: 100%; border-right: 2px solid #d4d4d4; display: flex; align-items: center; gap: 13px; padding-left: 13px; }
.viewrow { display: flex; gap: 12px; align-items: flex-start; }
.view { width: 1768px; height: 1216px; border: 2px solid #d4d4d4; background: #fff; padding-left: 27px; flex: none; }
.view h1 { margin: 0 0 0 -8px; height: 103px; font: 300 40.500px "Open Sans", "Noto Sans", sans-serif; line-height: 97px; letter-spacing: 0.600px; white-space: nowrap; color: #333; }
.legend { flex: 1; height: 142px; border: 2px solid #d4d4d4; background: #fff; }
.lh { height: 58px; background: #fafafa; padding-left: 12px; line-height: 60px; white-space: nowrap; letter-spacing: -0.100px; }
.lb { padding: 7px 8px 0 7px; }
.ramp { height: 33px; width: 288px; border: 2px solid #aaa398; }
.ll { display: flex; justify-content: space-between; padding: 5px 2px 0 1px; width: 288px; }

.tabs { height: 62px; flex: none; background: #e6e6e6; border-top: 2px solid #ccc; border-bottom: 2px solid #ccc; display: flex; color: #555; white-space: nowrap; }
.tab { border-right: 2px solid #ccc; display: flex; align-items: center; padding-left: 12px; flex: none; font-size: 24px; letter-spacing: 0.200px; }
.src { width: 262px; padding-left: 19px; gap: 11px; letter-spacing: 0.350px; }
.cut { width: 213px; padding: 0; overflow: hidden; }
.cut span { margin-left: -8px; letter-spacing: 0; }
.on { width: 359px; padding-left: 11px; background: #fafafa; font-weight: 700; letter-spacing: 0.720px; }
.ic { width: 64px; padding-left: 17px; }
.ic svg { margin-top: 4px; }
.status { height: 40px; flex: none; background: linear-gradient(#ececec, #e2e2e2); display: flex; align-items: center; color: #000; font-size: 22px; white-space: nowrap; }
.status > span { padding-bottom: 2px; }
.s1 { margin-left: 24px; width: 159px; }
.s2 { width: 198px; letter-spacing: -0.750px; }
.s3 { width: 1720px; letter-spacing: -0.400px; }
.user { height: 100%; width: 255px; border: solid #c8c8c8; border-width: 0 2px; display: flex; align-items: center; padding-left: 11px; }
.user span { margin-left: 19px; width: 173px; letter-spacing: -0.700px; padding-bottom: 2px; }
.dk { background: #000; }
.cell { height: 100%; border-right: 2px solid #c8c8c8; }
.c1 { width: 54px; }
.c2 { width: 54px; }
.c3 { width: 94px; }
.nav { height: 100%; width: 142px; border-right: 2px solid #c8c8c8; display: flex; align-items: center; padding-left: 15px; }
.modes { padding-left: 17px; }

.dock { position: relative; margin: 36px 0 0 66px; width: 2748px; height: 102px; border-radius: 30px; border: 2px solid rgba(190, 160, 255, 0.650); background: linear-gradient(90deg, #8062d6 0, #7362c6 500px, #6f60d4 1050px, #8660fa 1320px, #8a60f8 1500px, #ac5ff8 1900px, #b060fa 2150px, #9460f8 2500px, #8d60fa 2748px); display: flex; }
.app { position: relative; flex: none; padding-top: 14px; }
.dot { position: absolute; left: 28px; bottom: 4px; width: 8px; height: 8px; border-radius: 50%; background: #1c0658; }
.dsep { width: 2px; height: 74px; margin-top: 12px; background: #6a34b8; }
</style>
